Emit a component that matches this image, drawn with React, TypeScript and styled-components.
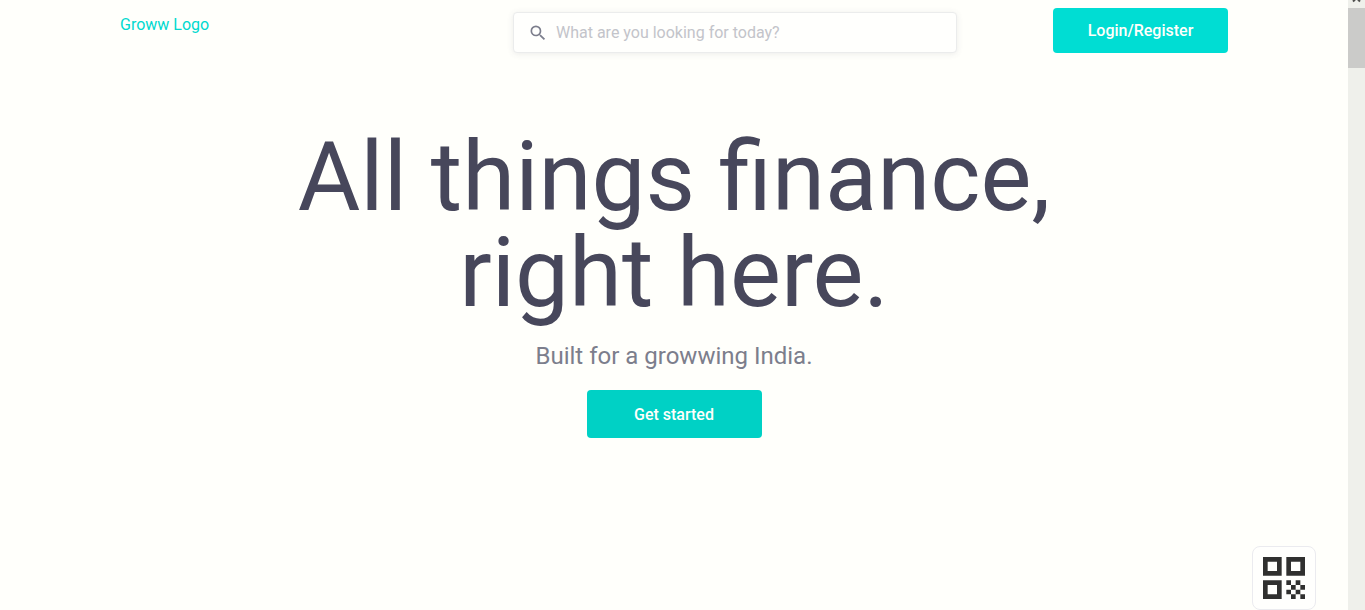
import React from 'react';
import styled, { createGlobalStyle } from 'styled-components';
import { MdQrCode, MdSearch } from 'react-icons/md';

const GlobalStyle = createGlobalStyle`
  *, *::before, *::after { box-sizing: border-box; }
  body {
    margin: 0;
    background: #fffffb;
    color: #47475b;
    font-family: Roboto, "Liberation Sans", sans-serif;
    font-size: 16px;
  }
`;

const Shell = styled.div`
  position: relative;
  display: flex;
  height: 100vh;
  overflow: hidden;
`;

const Page = styled.div`
  flex: 1;
  min-width: 0;
`;

const Header = styled.header`
  display: flex;
  justify-content: space-between;
  align-items: flex-start;
  padding: 8px 120px 0;
`;

const Logo = styled.a`
  padding-top: 7px;
  color: #00d9cf;
  line-height: 20px;
  text-decoration: none;
`;

const Actions = styled.div`
  display: flex;
  align-items: center;
  gap: 96px;
`;

const SearchBox = styled.label`
  display: flex;
  align-items: center;
  gap: 8px;
  width: 444px;
  height: 41px;
  margin-top: 4px;
  padding: 0 14px;
  border: 1px solid #ebecec;
  border-radius: 4px;
  background: #fffffd;
  box-shadow: 0 1px 6px rgba(68, 71, 91, 0.1);
  color: #7c7e8c;
`;

const SearchInput = styled.input`
  flex: 1;
  min-width: 0;
  padding: 0;
  border: 0;
  outline: 0;
  background: transparent;
  color: #47475b;
  font: inherit;
  line-height: 24px;

  &::placeholder {
    color: #c3c4ca;
    opacity: 1;
  }
`;

const Button = styled.button<{ $tone: string; $height: number }>`
  width: 175px;
  height: ${({ $height }) => $height}px;
  padding: 0;
  border: 0;
  border-radius: 4px;
  background: ${({ $tone }) => $tone};
  color: #fffffb;
  font: inherit;
  font-weight: 500;
  cursor: pointer;
`;

const Hero = styled.main`
  display: flex;
  flex-direction: column;
  align-items: center;
  padding-top: 76px;
  text-align: center;
`;

const Title = styled.h1`
  max-width: 860px;
  margin: 0;
  font-size: 96px;
  font-weight: 400;
  line-height: 96px;
`;

const Tagline = styled.p`
  margin: 21px 0 20px;
  color: #7c7e8c;
  font-size: 24px;
  line-height: 28px;
`;

const QrButton = styled.button`
  position: absolute;
  right: 49px;
  bottom: 0;
  display: flex;
  padding: 3px;
  border: 1px solid #ebebef;
  border-radius: 8px;
  background: #fffffd;
  color: #30302f;
  cursor: pointer;
`;

const ScrollTrack = styled.div`
  width: 17px;
  background: #eff0eb;
`;

const ScrollArrow = styled.svg`
  display: block;
  width: 17px;
  height: 8px;
`;

const ScrollThumb = styled.div`
  height: 60px;
  background: #cbcbc9;
`;

export default function App() {
  return (
    <>
      <GlobalStyle />
      <Shell>
        <Page>
          <Header>
            <Logo href="#">Groww Logo</Logo>
            <Actions>
              <SearchBox>
                <MdSearch size={20} aria-hidden />
                <SearchInput
                  type="text"
                  aria-label="Search"
                  placeholder="What are you looking for today?"
                />
              </SearchBox>
              <Button type="button" $tone="#00ddd3" $height={45}>Login/Register</Button>
            </Actions>
          </Header>
          <Hero>
            <Title>All things finance, right here.</Title>
            <Tagline>Built for a growwing India.</Tagline>
            <Button type="button" $tone="#00d1c5" $height={48}>Get started</Button>
          </Hero>
        </Page>
        <ScrollTrack aria-hidden>
          <ScrollArrow viewBox="0 0 17 8">
            <path d="M5 1.5L7 -0.5M12 1.5L10 -0.5" stroke="#50504e" strokeWidth="2" />
          </ScrollArrow>
          <ScrollThumb />
        </ScrollTrack>
        <QrButton type="button" aria-label="Show QR code">
          <MdQrCode size={56} aria-hidden />
        </QrButton>
      </Shell>
    </>
  );
}
